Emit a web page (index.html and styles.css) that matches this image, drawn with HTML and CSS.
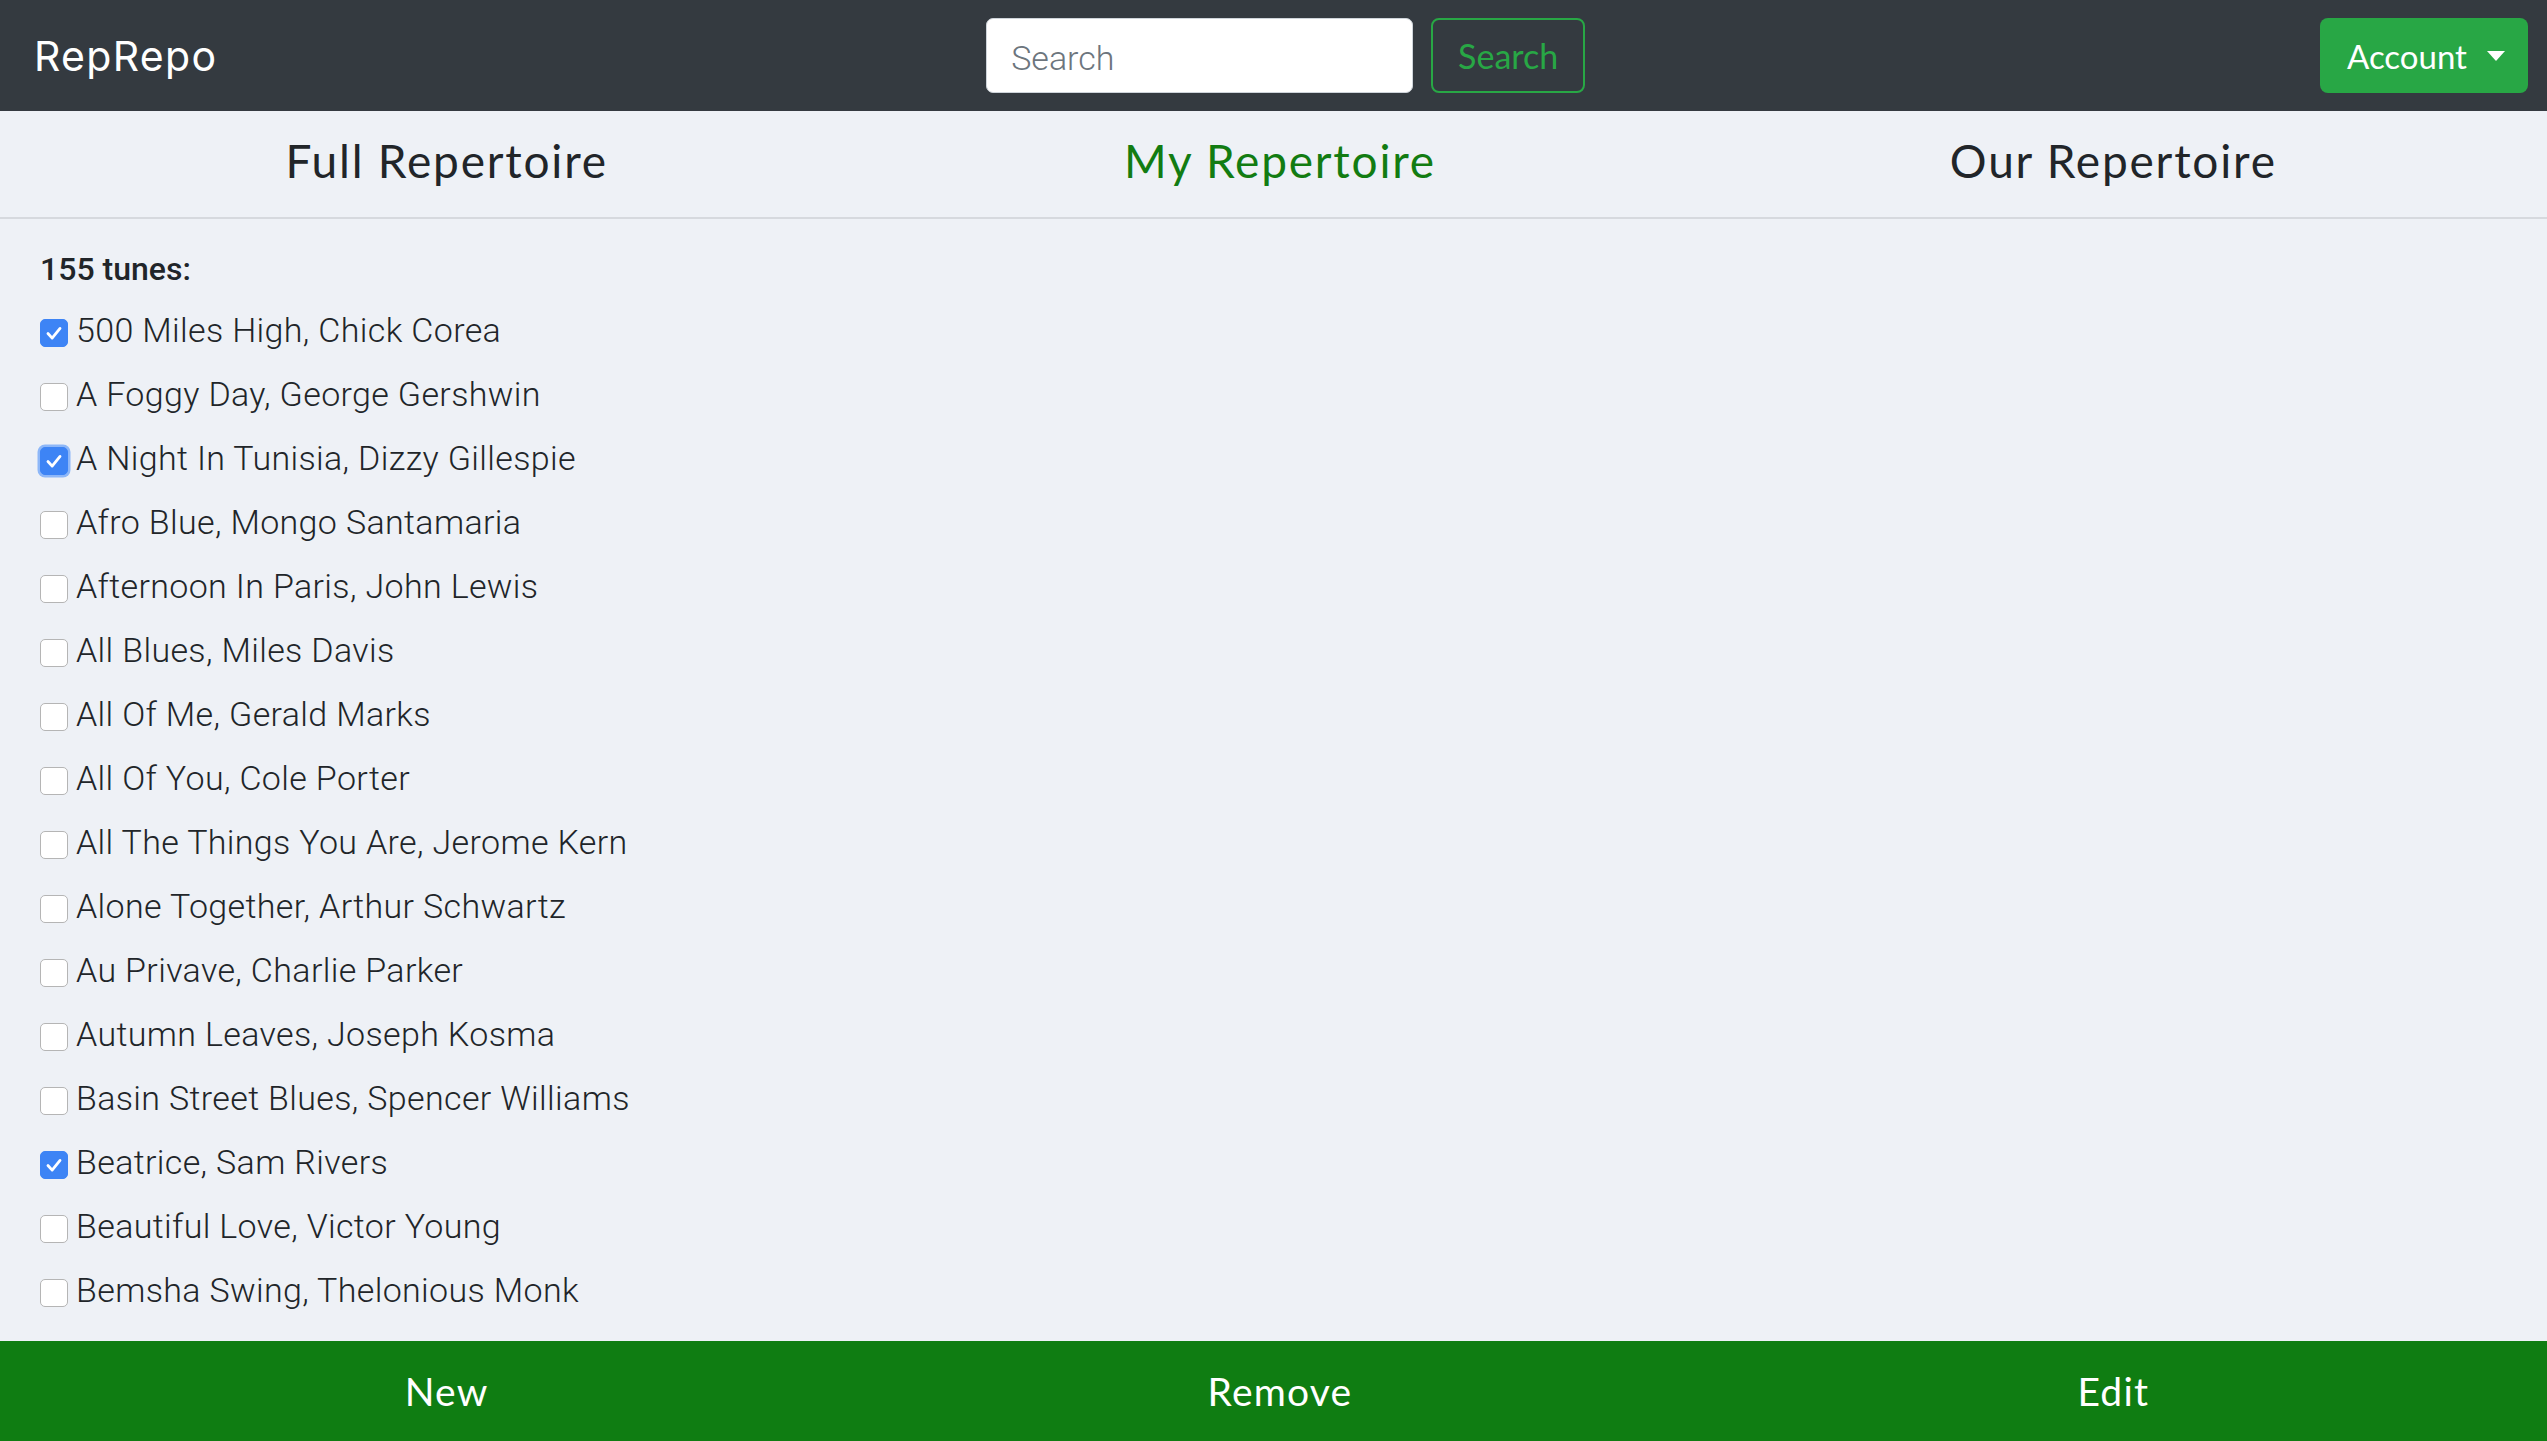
FILE: index.html
```html
<!DOCTYPE html>
<html lang="en">
<head>
<meta charset="utf-8">
<title>RepRepo</title>
<link rel="stylesheet" href="styles.css">
</head>
<body>
<nav class="navbar">
  <a class="brand" href="#">RepRepo</a>
  <form class="search">
    <input class="search-input" type="text" placeholder="Search">
    <button class="btn-search" type="button">Search</button>
  </form>
  <button class="btn-account" type="button">Account<span class="caret"></span></button>
</nav>
<div class="tabs">
  <div class="tab">Full Repertoire</div>
  <div class="tab active">My Repertoire</div>
  <div class="tab">Our Repertoire</div>
</div>
<main class="list">
  <div class="count">155 tunes:</div>
  <label class="row"><span class="box checked"><svg viewBox="0 0 28 28"><polyline points="7.5,14.5 12,19.5 20.5,9"/></svg></span><span class="name">500 Miles High, Chick Corea</span></label>
  <label class="row"><span class="box"></span><span class="name">A Foggy Day, George Gershwin</span></label>
  <label class="row"><span class="box checked focused"><svg viewBox="0 0 28 28"><polyline points="7.5,14.5 12,19.5 20.5,9"/></svg></span><span class="name">A Night In Tunisia, Dizzy Gillespie</span></label>
  <label class="row"><span class="box"></span><span class="name">Afro Blue, Mongo Santamaria</span></label>
  <label class="row"><span class="box"></span><span class="name">Afternoon In Paris, John Lewis</span></label>
  <label class="row"><span class="box"></span><span class="name">All Blues, Miles Davis</span></label>
  <label class="row"><span class="box"></span><span class="name">All Of Me, Gerald Marks</span></label>
  <label class="row"><span class="box"></span><span class="name">All Of You, Cole Porter</span></label>
  <label class="row"><span class="box"></span><span class="name">All The Things You Are, Jerome Kern</span></label>
  <label class="row"><span class="box"></span><span class="name">Alone Together, Arthur Schwartz</span></label>
  <label class="row"><span class="box"></span><span class="name">Au Privave, Charlie Parker</span></label>
  <label class="row"><span class="box"></span><span class="name">Autumn Leaves, Joseph Kosma</span></label>
  <label class="row"><span class="box"></span><span class="name">Basin Street Blues, Spencer Williams</span></label>
  <label class="row"><span class="box checked"><svg viewBox="0 0 28 28"><polyline points="7.5,14.5 12,19.5 20.5,9"/></svg></span><span class="name">Beatrice, Sam Rivers</span></label>
  <label class="row"><span class="box"></span><span class="name">Beautiful Love, Victor Young</span></label>
  <label class="row"><span class="box"></span><span class="name">Bemsha Swing, Thelonious Monk</span></label>
  <label class="row"><span class="box"></span><span class="name">Bernie's Tune, Bernie Miller</span></label>
  <label class="row"><span class="box"></span><span class="name">Bessie's Blues, John Coltrane</span></label>
</main>
<footer class="actions">
  <div class="action">New</div>
  <div class="action">Remove</div>
  <div class="action">Edit</div>
</footer>
</body>
</html>
```
FILE: styles.css
```css
html, body {
  margin: 0;
  padding: 0;
  height: 100%;
  overflow: hidden;
}
body {
  background: #eef1f6;
  color: #212529;
  font-family: "Roboto", "Liberation Sans", sans-serif;
}
.navbar {
  height: 111px;
  box-sizing: border-box;
  background: #343a40;
  display: flex;
  align-items: center;
  padding: 0 19px 0 34px;
}
.brand {
  font-family: "Inter", "Lato", sans-serif;
  font-size: 41px;
  font-weight: 400;
  letter-spacing: 1.3px;
  color: #ffffff;
  text-decoration: none;
  margin-right: 34px;
}
.search {
  display: flex;
  align-items: center;
  gap: 18px;
  margin: 0 auto;
}
.search-input {
  box-sizing: border-box;
  width: 427px;
  height: 75px;
  border: 1px solid #ced4da;
  border-radius: 7px;
  background: #ffffff;
  padding: 5px 24px 0;
  font-family: "Roboto", sans-serif;
  font-weight: 300;
  font-size: 34px;
  color: #495057;
  outline: none;
}
.search-input::placeholder {
  color: #6c757d;
}
.btn-search {
  box-sizing: border-box;
  width: 154px;
  height: 75px;
  border: 2px solid #28a745;
  border-radius: 8px;
  background: transparent;
  color: #28a745;
  font-family: "Lato", sans-serif;
  font-size: 34px;
  padding: 0;
}
.btn-account {
  box-sizing: border-box;
  width: 208px;
  height: 75px;
  border: none;
  border-radius: 8px;
  background: #28a745;
  color: #ffffff;
  font-family: "Lato", sans-serif;
  font-size: 33px;
  display: flex;
  align-items: center;
  padding: 0 0 0 27px;
}
.caret {
  width: 0;
  height: 0;
  margin-left: 20px;
  border-top: 10px solid #ffffff;
  border-left: 9.5px solid transparent;
  border-right: 9.5px solid transparent;
}
.tabs {
  height: 108px;
  box-sizing: border-box;
  border-bottom: 2px solid #d6d9de;
  display: grid;
  grid-template-columns: 1fr 1fr 1fr;
  padding: 0 17px 8px 30px;
  align-items: center;
}
.tab {
  text-align: center;
  font-family: "Lato", sans-serif;
  font-size: 46px;
  letter-spacing: 1.8px;
  color: #212529;
}
.tab.active {
  color: #127c12;
}
.list {
  padding: 21px 0 0 40px;
}
.count {
  height: 58px;
  line-height: 58px;
  font-family: "Roboto", sans-serif;
  font-weight: 500;
  font-size: 32px;
}
.row {
  display: flex;
  align-items: center;
  height: 64px;
  gap: 8px;
}
.box {
  box-sizing: border-box;
  width: 28px;
  height: 28px;
  border: 1px solid #b5b5b5;
  border-radius: 5px;
  background: #ffffff;
  margin-top: 5px;
  flex: none;
  display: flex;
}
.box.checked {
  background: #3d84f5;
  border-color: #3d84f5;
}
.box.focused {
  box-shadow: 0 0 0 2.5px #8db7f8;
}
.box svg {
  width: 100%;
  height: 100%;
  fill: none;
  stroke: #ffffff;
  stroke-width: 3;
  stroke-linecap: round;
  stroke-linejoin: round;
}
.name {
  font-family: "Roboto", sans-serif;
  font-weight: 300;
  font-size: 34px;
  letter-spacing: 0.35px;
  line-height: 64px;
  white-space: nowrap;
}
.actions {
  position: fixed;
  left: 0;
  right: 0;
  bottom: 0;
  height: 100px;
  background: #0f7d12;
  display: grid;
  grid-template-columns: 1fr 1fr 1fr;
  align-items: center;
  padding: 0 17px 0 30px;
}
.action {
  text-align: center;
  color: #ffffff;
  font-family: "Lato", sans-serif;
  font-size: 39px;
  letter-spacing: 1.2px;
}
```
